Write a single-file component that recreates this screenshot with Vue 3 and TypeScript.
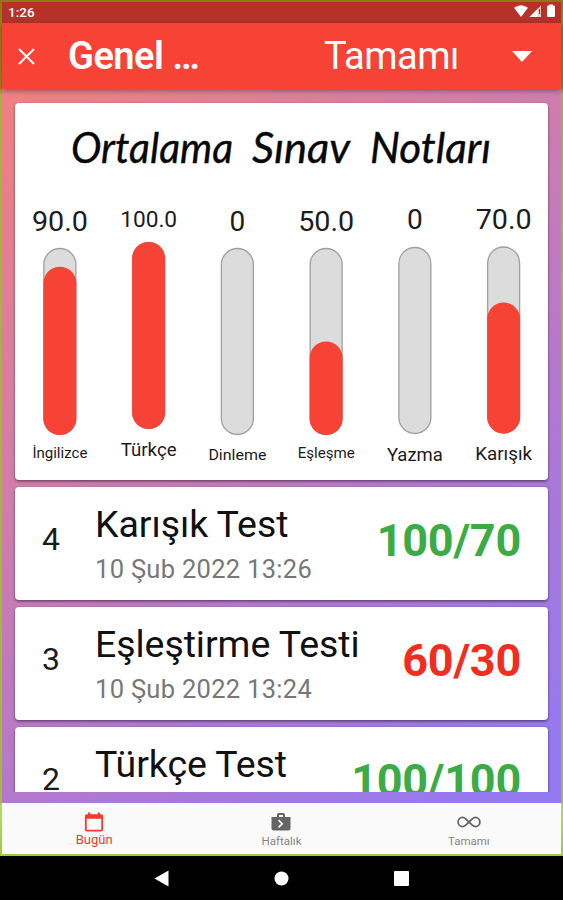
<script setup lang="ts">
interface Column {
  value: string
  size: number
  base: number
  width?: number
  top: number
  fill: number
  label: string
  labelSize: number
  labelBase: number
  labelWidth: number
}

interface Exam {
  id: number
  title: string
  date: string
  score: string
  passed: boolean
}

const PITCH = 88.75
const BAR_HEIGHT = 187

const columns: Column[] = [
  { value: '90.0', size: 27.5, base: 128, width: 56, top: 145, fill: 90, label: 'İngilizce', labelSize: 15.5, labelBase: 355, labelWidth: 55 },
  { value: '100.0', size: 22, base: 124, width: 57, top: 139, fill: 100, label: 'Türkçe', labelSize: 18.5, labelBase: 353, labelWidth: 56 },
  { value: '0', size: 28, base: 127.5, top: 145, fill: 0, label: 'Dinleme', labelSize: 15.5, labelBase: 356.5, labelWidth: 58 },
  { value: '50.0', size: 27.5, base: 128, width: 56, top: 145, fill: 50, label: 'Eşleşme', labelSize: 15.5, labelBase: 355, labelWidth: 57 },
  { value: '0', size: 28, base: 126, top: 144, fill: 0, label: 'Yazma', labelSize: 18.5, labelBase: 358, labelWidth: 56 },
  { value: '70.0', size: 27.5, base: 126, width: 56, top: 143.5, fill: 70, label: 'Karışık', labelSize: 18.5, labelBase: 357, labelWidth: 57 },
]

const heading = [
  { text: 'Ortalama', x: 56, width: 162 },
  { text: 'Sınav', x: 237, width: 98 },
  { text: 'Notları', x: 355, width: 121 },
]

const exams: Exam[] = [
  { id: 4, title: 'Karışık Test', date: '10 Şub 2022 13:26', score: '100/70', passed: true },
  { id: 3, title: 'Eşleştirme Testi', date: '10 Şub 2022 13:24', score: '60/30', passed: false },
  { id: 2, title: 'Türkçe Test', date: '10 Şub 2022 13:22', score: '100/100', passed: true },
]

const centre = (i: number) => PITCH * (i + 0.5) + 0.5
const fillHeight = (c: Column) => (BAR_HEIGHT * c.fill) / 100
</script>

<template>
  <div class="device">
    <div class="frame">
      <div class="status">
        <span>1:26</span>
        <svg width="44" height="14" viewBox="0 0 44 14" fill="#fff">
          <path d="M1 3.8Q8 -1.2 15 3.8L8 13z" />
          <path d="M28 1.5V13H16.5z" fill-opacity=".75" />
          <path d="M25 4.500V13H16.500z" />
          <path d="M26.500 5V10" stroke="#b53129" stroke-width="1.200" />
          <path d="M36 1.500V.5H40V1.500H41Q42 1.500 42 2.500V12Q42 13 41 13H35Q34 13 34 12V2.500Q34 1.500 35 1.500z" />
        </svg>
      </div>
      <header class="appbar">
        <svg class="close" width="17" height="17" viewBox="0 0 17 17"><path d="M1 1L16 16M16 1L1 16" stroke="#fff" stroke-width="2.100" /></svg>
        <h1>Genel …</h1>
        <div class="select">
          <span>Tamamı</span>
          <svg width="20" height="11" viewBox="0 0 20 11"><path d="M0 0H20L10 11z" fill="#fff" /></svg>
        </div>
      </header>

      <main class="body">
        <div class="scroller">
          <section class="card chart">
            <svg width="533" height="377" viewBox="0 0 533 377">
              <g class="heading">
                <text v-for="w in heading" :key="w.text" :x="w.x" y="59.5" :textLength="w.width" lengthAdjust="spacingAndGlyphs">{{ w.text }}</text>
              </g>
              <g v-for="(c, i) in columns" :key="c.label">
                <text class="value" :x="centre(i)" :y="c.base" :font-size="c.size" :textLength="c.width" lengthAdjust="spacingAndGlyphs">{{ c.value }}</text>
                <rect class="track" :x="centre(i) - 16" :y="c.top + 0.5" width="32" :height="BAR_HEIGHT - 1" rx="16" />
                <rect v-if="c.fill" class="fill" :x="centre(i) - 16.5" :y="c.top + BAR_HEIGHT - fillHeight(c)" width="33" :height="fillHeight(c)" rx="16.5" />
                <text class="label" :x="centre(i)" :y="c.labelBase" :font-size="c.labelSize" :textLength="c.labelWidth" lengthAdjust="spacingAndGlyphs">{{ c.label }}</text>
              </g>
            </svg>
          </section>

          <article v-for="e in exams" :key="e.id" class="card exam">
            <span class="order">{{ e.id }}</span>
            <div class="info">
              <div class="title">{{ e.title }}</div>
              <div class="date">{{ e.date }}</div>
            </div>
            <strong class="score" :class="{ failed: !e.passed }">{{ e.score }}</strong>
          </article>
        </div>
      </main>

      <nav class="tabs">
        <a class="tab active">
          <svg width="20" height="22" viewBox="0 0 20 22">
            <path d="M3.500 0.500H6V2.500H14V0.500H16.500V2.500H18Q20 2.500 20 4.500V19.500Q20 21.500 18 21.500H2Q0 21.500 0 19.500V4.500Q0 2.500 2 2.500H3.500zM2 7.500V19.500H18V7.500z" fill="currentColor" fill-rule="evenodd" />
          </svg>
          <span>Bugün</span>
        </a>
        <a class="tab">
          <svg width="20" height="20" viewBox="0 0 20 20">
            <path d="M6 5V2.800Q6 1 7.800 1H12.200Q14 1 14 2.800V5H19.500V16.500Q19.500 18.500 17.500 18.500H2.500Q.5 18.500 .5 16.500V5zM8 5H12V3H8zM8.200 7.500L7 8.700 10 11.700 7 14.700 8.200 15.900 12.400 11.700z" fill="currentColor" fill-rule="evenodd" />
          </svg>
          <span>Haftalık</span>
        </a>
        <a class="tab">
          <svg width="24" height="20" viewBox="0 0 24 20">
            <path d="M12 10L9 12.800C7.500 14.200 6.800 14.600 5.500 14.600A4.400 4.600 0 0 1 5.500 5.400C6.800 5.400 7.800 6 9 7.100L15 12.900C16.200 14 17.200 14.600 18.500 14.600A4.400 4.600 0 0 0 18.500 5.400C17.200 5.400 16.200 6 15 7.100L12 10" fill="none" stroke="currentColor" stroke-width="1.800" />
          </svg>
          <span>Tamamı</span>
        </a>
      </nav>
    </div>

    <div class="system">
      <svg width="15" height="17" viewBox="0 0 15 17"><path d="M14.500 .5V16.500L.5 8.500z" fill="#fff" /></svg>
      <svg width="15" height="15" viewBox="0 0 15 15"><circle cx="7.500" cy="7.500" r="7" fill="#fff" /></svg>
      <svg width="15" height="15" viewBox="0 0 15 15"><rect width="15" height="15" rx="1" fill="#fff" /></svg>
    </div>
  </div>
</template>

<style>
body {
  margin: 0;
  background: #000;
}
</style>

<style scoped>
.device {
  width: 563px;
  height: 900px;
  display: flex;
  flex-direction: column;
  overflow: hidden;
  background: #000;
  font-family: Roboto, "Liberation Sans", sans-serif;
}
.frame {
  box-sizing: border-box;
  height: 856px;
  padding: 2px;
  display: flex;
  flex-direction: column;
  background: linear-gradient(#8b7a12 0 2px, #918018 23px, #a48520 88px, #a5b33c 95px, #a5b844 802px, #b4dc58 805px, #a5c93c 100%);
}
.status {
  height: 21px;
  display: flex;
  justify-content: space-between;
  padding: 0 4px 0 6px;
  background: #b53129;
  color: #fff;
  font-size: 13.5px;
  font-weight: 500;
  line-height: 20px;
}
.status svg {
  margin-top: 2px;
}
.appbar {
  position: relative;
  z-index: 1;
  height: 66px;
  display: flex;
  align-items: center;
  background: #f64336;
  color: #fff;
  box-shadow: 0 2px 5px rgba(0, 0, 0, 0.35);
}
.close {
  margin-left: 16px;
}
h1 {
  margin: 0 0 0 33px;
  width: 220px;
  font-size: 38px;
  font-weight: 600;
  letter-spacing: -0.5px;
  line-height: 64px;
}
.select {
  flex: 1;
  display: flex;
  align-items: center;
  justify-content: space-between;
  padding: 0 29px 0 36px;
  font-size: 38px;
  letter-spacing: -0.5px;
  line-height: 64px;
}
.body {
  box-sizing: border-box;
  height: 714px;
  padding: 14px 13px 11px;
  background: linear-gradient(142deg, #f08080 0%, #cf7dac 38%, #b078d0 65%, #9479f0 95%);
}
.scroller {
  height: 689px;
  display: flex;
  flex-direction: column;
  gap: 7px;
  clip-path: inset(-6px -8px 0 -8px);
}
.card {
  flex: none;
  background: #fff;
  border-radius: 4px;
  box-shadow: 0 1px 3px rgba(0, 0, 0, 0.4), 0 2px 2px rgba(0, 0, 0, 0.15);
}
.chart {
  height: 377px;
}
.chart svg {
  display: block;
}
.heading {
  font-family: Lato, sans-serif;
  font-style: italic;
  font-size: 43.5px;
  fill: #080808;
  stroke: #080808;
  stroke-width: 0.4;
}
.value,
.label {
  text-anchor: middle;
  fill: #1c1c1c;
}
.track {
  fill: #dcdcdc;
  stroke: #a0a0a0;
  stroke-width: 1.3;
}
.fill {
  fill: #f64336;
}
.exam {
  box-sizing: border-box;
  height: 113px;
  display: flex;
  align-items: center;
  padding: 0 27px 0 27px;
}
.order {
  width: 53px;
  font-size: 32px;
  line-height: 38px;
  padding-bottom: 9px;
  color: #1b1b1b;
}
.info {
  flex: 1;
  padding-bottom: 2px;
  white-space: nowrap;
}
.title {
  font-size: 37.5px;
  line-height: 44px;
  letter-spacing: -0.07px;
  color: #111;
}
.date {
  margin-top: 8px;
  font-size: 25.5px;
  line-height: 30px;
  letter-spacing: 0.3px;
  color: #777;
}
.score {
  padding-bottom: 7px;
  font-size: 45px;
  line-height: 53px;
  font-weight: 700;
  letter-spacing: -0.25px;
  color: #3cab45;
}
.score.failed {
  color: #f12c20;
}
.tabs {
  height: 51px;
  display: grid;
  grid-template-columns: repeat(3, 1fr);
  background: #fafafa;
}
.tab {
  display: flex;
  flex-direction: column;
  align-items: center;
  padding-top: 9px;
  color: #656565;
  font-size: 11.5px;
  line-height: 14px;
}
.tab svg {
  height: 20px;
}
.tab:last-child {
  padding-left: 2px;
}
.tab.active {
  padding-right: 2px;
  color: #f5392d;
  font-size: 13px;
}
.tab.active span {
  margin-top: 1px;
}
.tab:not(.active) span {
  margin-top: 2px;
  color: #858585;
}
.system {
  flex: 1;
  display: flex;
  align-items: center;
  justify-content: center;
  gap: 105px;
}
</style>
